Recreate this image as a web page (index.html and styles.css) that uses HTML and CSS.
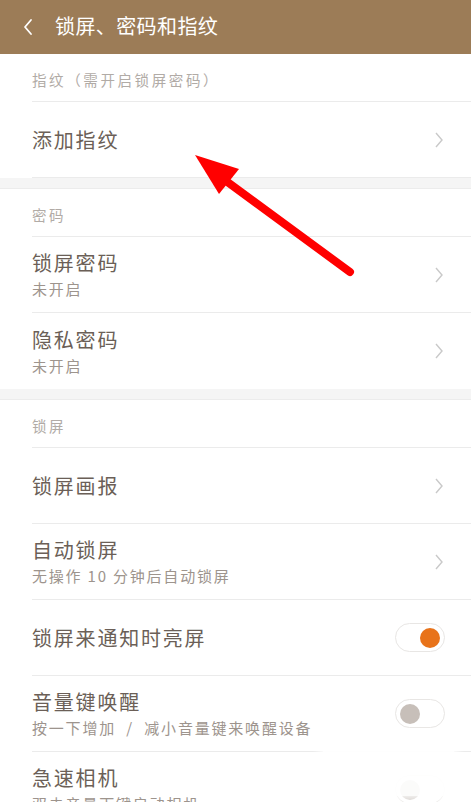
FILE: index.html
```html
<!DOCTYPE html>
<html lang="zh-CN">
<head>
<meta charset="utf-8">
<title>锁屏、密码和指纹</title>
<link rel="stylesheet" href="styles.css">
</head>
<body>
<div class="screen">
  <header class="topbar">
    <svg class="back" width="12" height="18" viewBox="0 0 12 18"><path d="M9 2 L3 9 L9 16" fill="none" stroke="#fff" stroke-width="1.8" stroke-linecap="round" stroke-linejoin="round"/></svg>
    <h1 class="title">锁屏、密码和指纹</h1>
  </header>

  <section class="group">
    <div class="group-label">指纹（需开启锁屏密码）</div>
    <div class="row">
      <div class="row-text"><div class="row-title">添加指纹</div></div>
      <svg class="chev" width="10" height="18" viewBox="0 0 10 18"><path d="M2 2 L8 9 L2 16" fill="none" stroke="#c9c9c9" stroke-width="1.4"/></svg>
    </div>
  </section>

  <div class="band"></div>

  <section class="group">
    <div class="group-label">密码</div>
    <div class="row">
      <div class="row-text"><div class="row-title">锁屏密码</div><div class="row-sub">未开启</div></div>
      <svg class="chev" width="10" height="18" viewBox="0 0 10 18"><path d="M2 2 L8 9 L2 16" fill="none" stroke="#c9c9c9" stroke-width="1.4"/></svg>
    </div>
    <div class="row last">
      <div class="row-text"><div class="row-title">隐私密码</div><div class="row-sub">未开启</div></div>
      <svg class="chev" width="10" height="18" viewBox="0 0 10 18"><path d="M2 2 L8 9 L2 16" fill="none" stroke="#c9c9c9" stroke-width="1.4"/></svg>
    </div>
  </section>

  <div class="band"></div>

  <section class="group">
    <div class="group-label">锁屏</div>
    <div class="row">
      <div class="row-text"><div class="row-title">锁屏画报</div></div>
      <svg class="chev" width="10" height="18" viewBox="0 0 10 18"><path d="M2 2 L8 9 L2 16" fill="none" stroke="#c9c9c9" stroke-width="1.4"/></svg>
    </div>
    <div class="row">
      <div class="row-text"><div class="row-title">自动锁屏</div><div class="row-sub">无操作 10 分钟后自动锁屏</div></div>
      <svg class="chev" width="10" height="18" viewBox="0 0 10 18"><path d="M2 2 L8 9 L2 16" fill="none" stroke="#c9c9c9" stroke-width="1.4"/></svg>
    </div>
    <div class="row toggle-row">
      <div class="row-text"><div class="row-title">锁屏来通知时亮屏</div></div>
      <div class="switch on"><span class="knob"></span></div>
    </div>
    <div class="row toggle-row">
      <div class="row-text"><div class="row-title">音量键唤醒</div><div class="row-sub">按一下增加 &nbsp;/&nbsp; 减小音量键来唤醒设备</div></div>
      <div class="switch"><span class="knob"></span></div>
    </div>
    <div class="row toggle-row">
      <div class="row-text"><div class="row-title">急速相机</div><div class="row-sub">双击音量下键启动相机</div></div>
      <div class="switch"><span class="knob"></span></div>
    </div>
  </section>

  <svg class="arrow" width="471" height="802" viewBox="0 0 471 802">
    <line x1="350" y1="272" x2="222" y2="178" stroke="#ff0000" stroke-width="8" stroke-linecap="round"/>
    <polygon points="195,155 239,169 219,194" fill="#ff0000"/>
  </svg>
  <div class="watermark"></div>
</div>
</body>
</html>
```
FILE: styles.css
```css
html, body {
  margin: 0;
  padding: 0;
  background: #ffffff;
}
body {
  font-family: "Noto Sans CJK SC", "Noto Sans", sans-serif;
  overflow: hidden;
}
.screen {
  position: relative;
  width: 471px;
  height: 802px;
  overflow: hidden;
  background: #fff;
}
.topbar {
  height: 54px;
  background: #9c7c57;
  display: flex;
  align-items: center;
  padding-left: 22px;
  box-sizing: border-box;
}
.back {
  display: block;
  margin-top: -1px;
}
.title {
  margin: -2px 0 0 21px;
  font-size: 20px;
  font-weight: 400;
  color: #ffffff;
  line-height: 1;
  letter-spacing: 0.4px;
}
.group {
  background: #fff;
}
.group-label {
  height: 48px;
  margin-left: 32px;
  display: flex;
  align-items: center;
  padding-top: 3px;
  box-sizing: border-box;
  border-bottom: 1px solid #ebebeb;
  font-size: 14.5px;
  letter-spacing: 2.6px;
  color: #b1aba6;
}
.row {
  height: 76px;
  margin-left: 32px;
  padding-right: 27px;
  box-sizing: border-box;
  display: flex;
  align-items: center;
  justify-content: space-between;
  border-bottom: 1px solid #ebebeb;
}
.row.last {
  border-bottom: none;
}
.toggle-row {
  padding-right: 26px;
}
.row-text {
  display: flex;
  flex-direction: column;
}
.row-title {
  font-size: 20px;
  line-height: 29px;
  letter-spacing: 1.8px;
  color: #6b5f57;
}
.row-sub {
  font-size: 15px;
  line-height: 24px;
  letter-spacing: 1.8px;
  color: #9d948d;
}
.chev {
  display: block;
}
.band {
  height: 11px;
  background: #f5f5f5;
  border-bottom: 1px solid #ececec;
  box-sizing: border-box;
}
.switch {
  width: 50px;
  height: 29px;
  border: 1px solid #e8e6e4;
  border-radius: 15px;
  box-sizing: border-box;
  display: flex;
  align-items: center;
  padding: 0 4px;
  background: #fff;
}
.switch.on {
  justify-content: flex-end;
}
.knob {
  width: 20px;
  height: 20px;
  border-radius: 50%;
  background: #c7bfb9;
}
.switch.on .knob {
  background: #e8731a;
}
.arrow {
  position: absolute;
  left: 0;
  top: 0;
  pointer-events: none;
}
.watermark {
  position: absolute;
  left: 323px;
  top: 738px;
  width: 131px;
  height: 58px;
  background: rgba(255, 255, 255, 0.93);
  box-shadow: 0 0 8px 4px rgba(255, 255, 255, 0.85);
}
```
